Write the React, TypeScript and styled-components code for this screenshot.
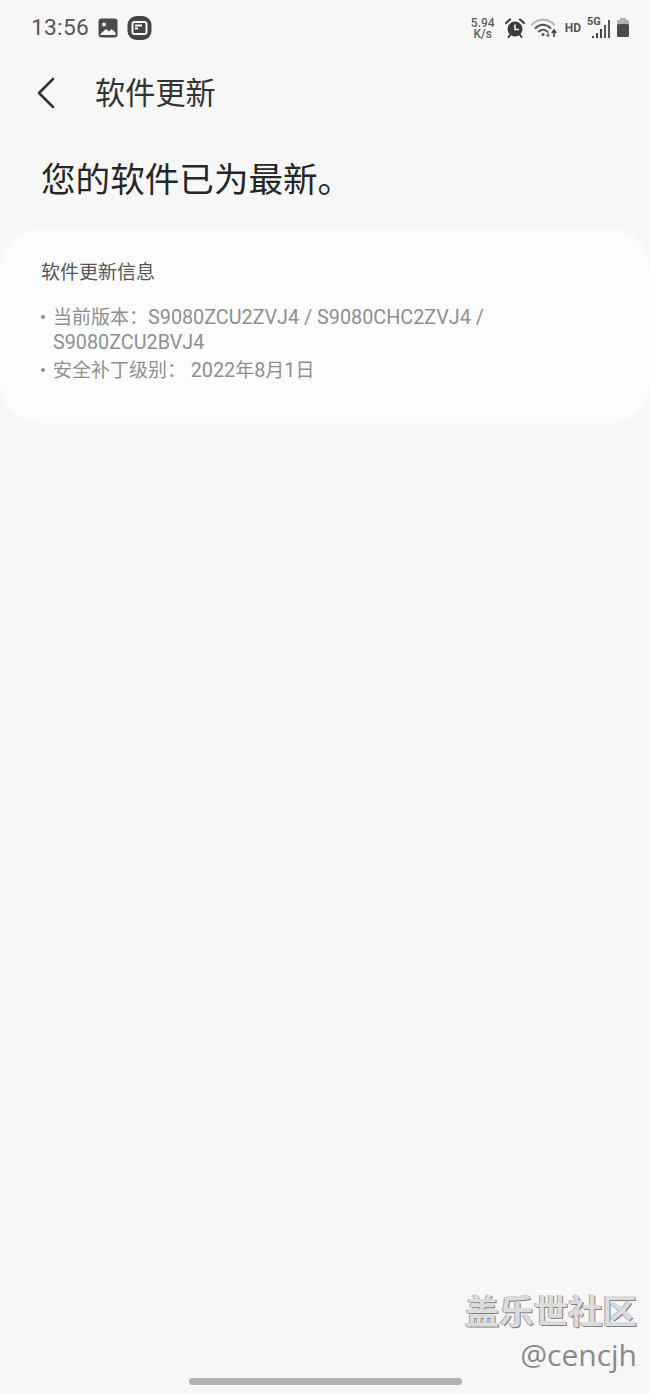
import React from "react";
import styled, { createGlobalStyle } from "styled-components";

const Global = createGlobalStyle`
  html, body { margin: 0; padding: 0; background: #f7f7f7; }
  * { box-sizing: border-box; }
`;

const FONT = `Roboto, "Noto Sans CJK SC", sans-serif`;

const Page = styled.div`
  position: relative;
  width: 650px;
  height: 1394px;
  overflow: hidden;
  background: #f7f7f7;
  font-family: ${FONT};
  display: flex;
  flex-direction: column;
`;

const StatusBar = styled.div`
  height: 56px;
  padding: 0 20px 0 31px;
  display: flex;
  align-items: center;
  justify-content: space-between;
`;

const StatusLeft = styled.div`
  display: flex;
  align-items: center;
  gap: 9px;
`;

const StatusRight = styled.div`
  display: flex;
  align-items: center;
  gap: 6px;
`;

const Clock = styled.span`
  font-size: 22.8px;
  line-height: 26px;
  color: #565656;
  letter-spacing: 0.25px;
`;

const Speed = styled.span`
  font-size: 12px;
  line-height: 11px;
  font-weight: 500;
  color: #5c5c5c;
  text-align: center;
  display: block;
  width: 28px;
  margin: 1px 2px 0 0;
`;

const HdLabel = styled.span`
  font-size: 12px;
  font-weight: 700;
  color: #555;
`;

const Header = styled.header`
  height: 74px;
  padding-left: 37px;
  display: flex;
  align-items: center;
  gap: 41px;
`;

const BackButton = styled.button`
  border: 0;
  background: none;
  padding: 0;
  width: 18px;
  height: 32px;
  display: flex;
`;

const Title = styled.h1`
  margin: 1px 0 0 -1px;
  font-size: 30.2px;
  line-height: 40px;
  font-weight: 400;
  color: #333;
`;

const Headline = styled.h2`
  margin: 0;
  padding: 28px 0 0 41px;
  height: 99px;
  font-size: 34.6px;
  line-height: 44px;
  font-weight: 400;
  color: #262626;
`;

const Card = styled.section`
  height: 194px;
  border-radius: 40px;
  background: #fcfcfc;
  padding: 31px 20px 0 41px;
`;

const CardTitle = styled.h3`
  margin: 0 0 19px;
  font-size: 19px;
  line-height: 26px;
  font-weight: 400;
  color: #555;
`;

const InfoList = styled.ul`
  margin: 0;
  padding: 0;
  list-style: none;
`;

const InfoItem = styled.li`
  position: relative;
  padding-left: 12px;
  font-size: 19px;
  line-height: 25px;
  margin-bottom: 3px;
  color: #8f8f8f;
  &::before {
    content: "";
    position: absolute;
    left: 0;
    top: 10px;
    width: 4px;
    height: 4px;
    border-radius: 50%;
    background: #8f8f8f;
  }
`;

const Latin = styled.span`
  font-size: 19.8px;
`;

const Spacer = styled.div`
  flex: 1;
`;

const HomeBar = styled.div`
  align-self: center;
  width: 273px;
  height: 7px;
  border-radius: 4px;
  background: #b2b2b2;
  margin: 0 0 9px 0;
`;

const Watermark = styled.div`
  position: absolute;
  right: 13px;
  bottom: 21px;
  text-align: right;
`;

const WatermarkTitle = styled.div`
  font-size: 34.4px;
  line-height: 42px;
  margin-bottom: 4px;
  font-weight: 700;
  color: #dcdcdc;
  text-shadow: 1px 1px 0 #808080, -1px 0 0 #a5a5a5;
`;

const WatermarkUser = styled.div`
  font-size: 30px;
  line-height: 36px;
  font-family: "Open Sans", sans-serif;
  color: #8a8a8a;
`;

const ImageIcon = () => (
  <svg width="20" height="20" viewBox="0 0 20 20">
    <rect x="0.5" y="0.5" width="19" height="19" rx="3" fill="#4a4a4a" />
    <circle cx="6" cy="6.5" r="2" fill="#f7f7f7" />
    <path d="M2.5 16l5.5-5 3 2.5 2.5-2.5 4 3.5v2.5H2.5z" fill="#f7f7f7" />
  </svg>
);

const AppIcon = () => (
  <svg width="25" height="24" viewBox="0 0 25 24">
    <rect x="0.5" y="0" width="24" height="24" rx="9" fill="#444" />
    <rect x="5.5" y="6" width="14" height="12" rx="2" fill="none" stroke="#f7f7f7" strokeWidth="2" />
    <path d="M8 9.5h7M8 12.5h3" stroke="#f7f7f7" strokeWidth="2" />
  </svg>
);

const AlarmIcon = () => (
  <svg width="20" height="20" viewBox="0 0 20 20">
    <circle cx="10" cy="11" r="7.5" fill="#3d3d3d" />
    <path d="M10 6.5V11.5H14" fill="none" stroke="#f7f7f7" strokeWidth="1.6" />
    <path d="M1 5l4-3.5M19 5l-4-3.5" stroke="#3d3d3d" strokeWidth="2.2" strokeLinecap="round" />
    <path d="M5 17l-1.5 2M15 17l1.5 2" stroke="#3d3d3d" strokeWidth="2" strokeLinecap="round" />
  </svg>
);

const WifiIcon = () => (
  <svg width="28" height="22" viewBox="0 0 28 22">
    <path d="M1 7.5C7 1 17 1 23 7.5" fill="none" stroke="#b5b5b5" strokeWidth="2" strokeLinecap="round" />
    <path d="M4.5 11C9 6.5 15 6.5 19.5 11" fill="none" stroke="#555" strokeWidth="2" strokeLinecap="round" />
    <path d="M8 14.5C10.5 12 13.5 12 16 14.5" fill="none" stroke="#555" strokeWidth="2" strokeLinecap="round" />
    <circle cx="12" cy="17.5" r="1.6" fill="#555" />
    <path d="M17 14v5M15.5 17.5l1.5 2 1.5-2" fill="none" stroke="#777" strokeWidth="1.3" />
    <path d="M23 20v-7M20.8 16l2.2-3 2.2 3" fill="none" stroke="#444" strokeWidth="1.6" />
  </svg>
);

const SignalIcon = () => (
  <svg width="23" height="24" viewBox="0 0 23 24">
    <text x="0" y="9" fontSize="11" fontWeight="700" fontFamily="Roboto, sans-serif" fill="#555">5G</text>
    <rect x="5" y="20" width="2" height="2" fill="#444" />
    <rect x="9" y="17" width="2" height="5" fill="#444" />
    <rect x="13" y="13" width="2" height="9" fill="#444" />
    <rect x="17" y="9" width="2" height="13" fill="#555" />
    <rect x="21" y="4" width="2" height="18" fill="#555" />
  </svg>
);

const BatteryIcon = () => (
  <svg width="14" height="20" viewBox="0 0 14 20">
    <rect x="4" y="0" width="6" height="3" fill="#b0b0b0" />
    <rect x="1" y="2" width="12" height="5" rx="1" fill="#b0b0b0" />
    <rect x="1" y="6" width="12" height="13" rx="1.5" fill="#4b4b4b" />
  </svg>
);

const BackIcon = () => (
  <svg width="18" height="32" viewBox="0 0 18 32">
    <path d="M16 2L2 16l14 14" fill="none" stroke="#333" strokeWidth="2.6" strokeLinecap="round" strokeLinejoin="round" />
  </svg>
);

export default function App() {
  return (
    <Page>
      <Global />
      <StatusBar>
        <StatusLeft>
          <Clock>13:56</Clock>
          <ImageIcon />
          <AppIcon />
        </StatusLeft>
        <StatusRight>
          <Speed>5.94 K/s</Speed>
          <AlarmIcon />
          <WifiIcon />
          <HdLabel>HD</HdLabel>
          <SignalIcon />
          <BatteryIcon />
        </StatusRight>
      </StatusBar>
      <Header>
        <BackButton aria-label="返回">
          <BackIcon />
        </BackButton>
        <Title>软件更新</Title>
      </Header>
      <Headline>您的软件已为最新。</Headline>
      <Card>
        <CardTitle>软件更新信息</CardTitle>
        <InfoList>
          <InfoItem>
            当前版本：<Latin>S9080ZCU2ZVJ4 / S9080CHC2ZVJ4 / S9080ZCU2BVJ4</Latin>
          </InfoItem>
          <InfoItem>
            安全补丁级别： <Latin>2022</Latin>年<Latin>8</Latin>月<Latin>1</Latin>日
          </InfoItem>
        </InfoList>
      </Card>
      <Spacer />
      <HomeBar />
      <Watermark>
        <WatermarkTitle>盖乐世社区</WatermarkTitle>
        <WatermarkUser>@cencjh</WatermarkUser>
      </Watermark>
    </Page>
  );
}
